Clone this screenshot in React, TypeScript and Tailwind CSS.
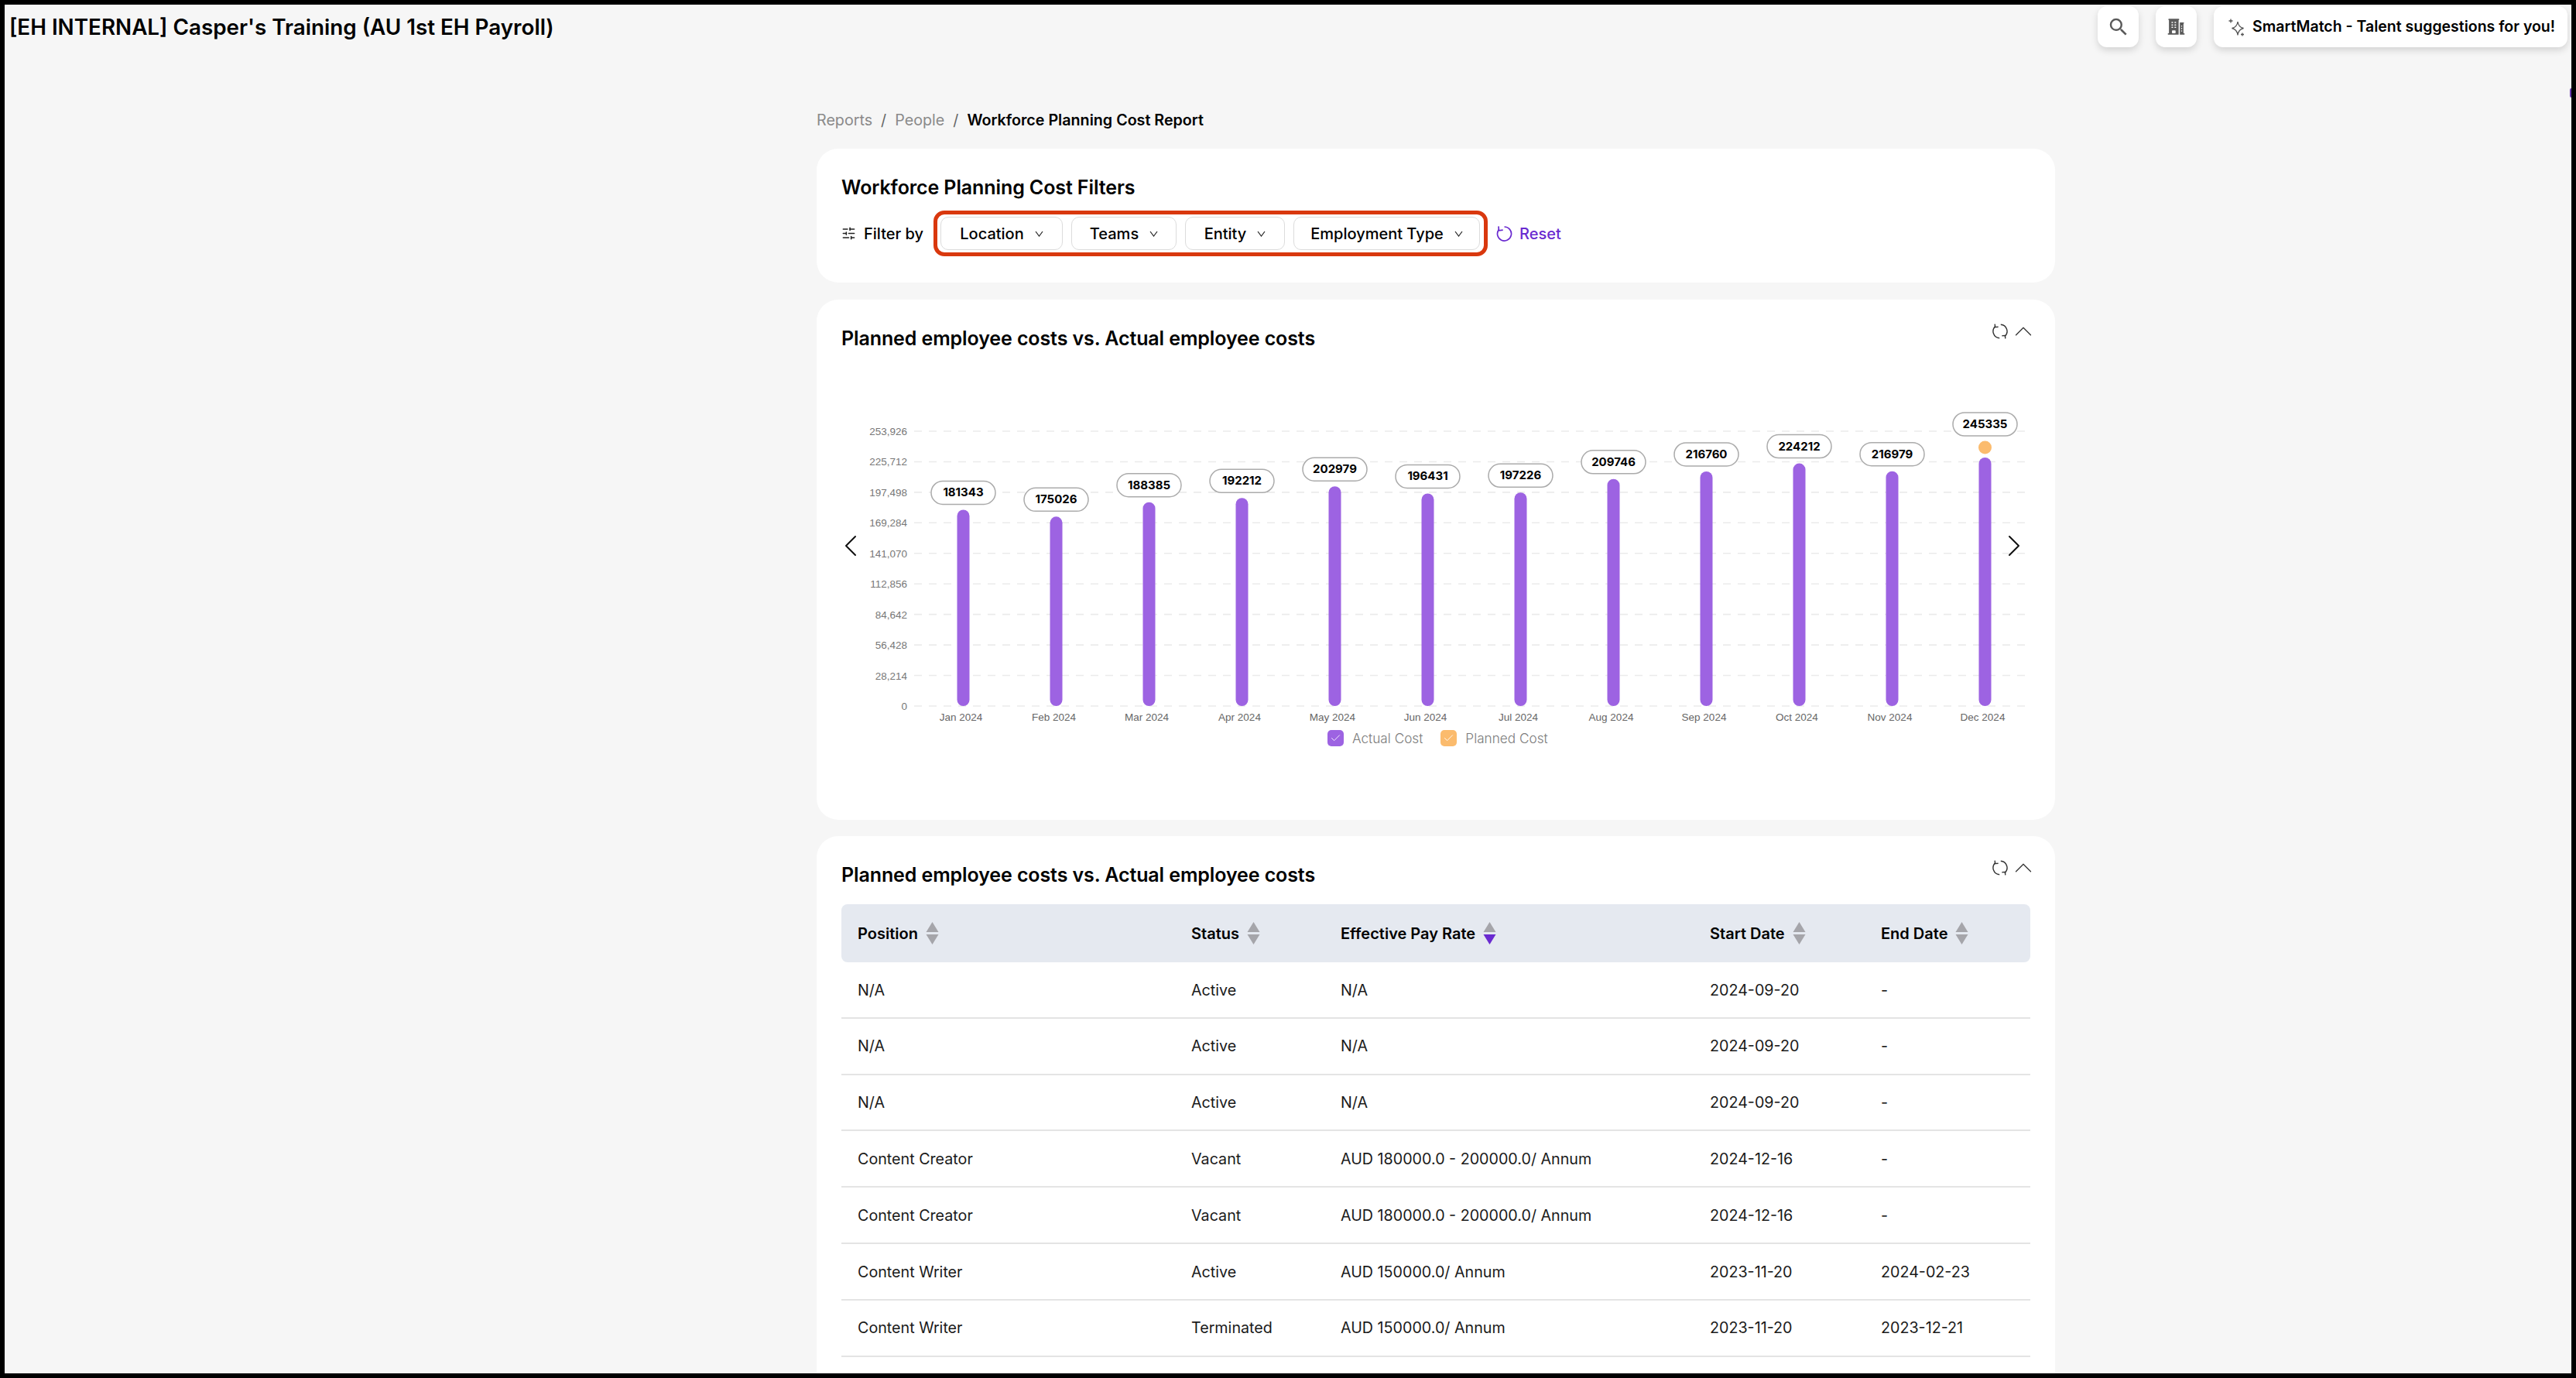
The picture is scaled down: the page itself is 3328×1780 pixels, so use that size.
import { ChevronLeft, ChevronRight, ChevronUp, Check, SlidersHorizontal } from "lucide-react";
import { HiBuildingOffice2 } from "react-icons/hi2";
import { MdSearch } from "react-icons/md";

const BAR_BASE = 355;
const BAR_MAX = 253926;

const yTicks = ["253,926", "225,712", "197,498", "169,284", "141,070", "112,856", "84,642", "56,428", "28,214", "0"];

const months = [
  { label: "Jan 2024", value: 181343 },
  { label: "Feb 2024", value: 175026 },
  { label: "Mar 2024", value: 188385 },
  { label: "Apr 2024", value: 192212 },
  { label: "May 2024", value: 202979 },
  { label: "Jun 2024", value: 196431 },
  { label: "Jul 2024", value: 197226 },
  { label: "Aug 2024", value: 209746 },
  { label: "Sep 2024", value: 216760 },
  { label: "Oct 2024", value: 224212 },
  { label: "Nov 2024", value: 216979 },
  { label: "Dec 2024", value: 245335, bar: 321, planned: true },
];

const rows = [
  ["N/A", "Active", "N/A", "2024-09-20", "-"],
  ["N/A", "Active", "N/A", "2024-09-20", "-"],
  ["N/A", "Active", "N/A", "2024-09-20", "-"],
  ["Content Creator", "Vacant", "AUD 180000.0 - 200000.0/ Annum", "2024-12-16", "-"],
  ["Content Creator", "Vacant", "AUD 180000.0 - 200000.0/ Annum", "2024-12-16", "-"],
  ["Content Writer", "Active", "AUD 150000.0/ Annum", "2023-11-20", "2024-02-23"],
  ["Content Writer", "Terminated", "AUD 150000.0/ Annum", "2023-11-20", "2023-12-21"],
];

const COLS = "grid grid-cols-[431px_193px_477px_221px_214px]";

function SortIcon({ active }: { active?: boolean }) {
  return (
    <svg width="17" height="29" viewBox="0 0 17 29" className="ml-[10px]">
      <path d="M8.5 0 L16.5 13 H0.5 Z" fill="#a5a5aa" strokeLinejoin="round" />
      <path d="M0.5 16 H16.5 L8.5 29 Z" fill={active ? "#6a2bd0" : "#a5a5aa"} />
    </svg>
  );
}

function SyncIcon() {
  return (
    <svg width="20" height="20" viewBox="0 0 20 20" fill="none" stroke="#333" strokeWidth="1.4">
      <path d="M4 3.4 A8.8 8.8 0 0 0 9.2 18.8" />
      <path d="M16 16.6 A8.8 8.8 0 0 0 10.8 1.2" />
      <path d="M3.2 0.6 L3.6 4.6 L7.6 4.2" />
      <path d="M16.8 19.4 L16.4 15.4 L12.4 15.8" />
    </svg>
  );
}

function CardHeader({ title }: { title: string }) {
  return (
    <div className="flex items-start justify-between">
      <h2 className="mt-[34px] text-[25px] leading-[32px] font-semibold tracking-[-0.1px] text-black">{title}</h2>
      <div className="mt-[31px] flex items-center gap-[10px]">
        <SyncIcon />
        <ChevronUp size={38} strokeWidth={0.8} color="#333" className="-mx-[9.5px] -my-[9px]" />
      </div>
    </div>
  );
}

function FilterButton({ label, width }: { label: string; width: string }) {
  return (
    <button
      type="button"
      className={`flex h-[43px] items-center justify-center gap-[14px] rounded-[10px] border border-[#dcdcdc] bg-white text-[20px] font-medium text-black ${width}`}
    >
      {label}
      <svg width="11" height="8" viewBox="0 0 11 8" fill="none" stroke="#222" strokeWidth="1.2">
        <path d="M1 1 L5.5 7 L10 1" />
      </svg>
    </button>
  );
}

function Chart() {
  return (
    <svg width="1600" height="560" viewBox="0 0 1600 560" className="block" fontFamily="'Liberation Sans', sans-serif">
      {yTicks.map((tick, i) => {
        const y = 170 + i * 39.44;
        return (
          <g key={tick}>
            <line x1="126" x2="1568" y1={y} y2={y} stroke="#ebebeb" strokeWidth="1.6" strokeDasharray="10 9" />
            <text x="117" y={y + 5} textAnchor="end" fontSize="13.5" fill="#777">
              {tick}
            </text>
          </g>
        );
      })}
      {months.map((m, i) => {
        const cx = 189.5 + i * 120;
        const h = m.bar ?? (m.value / BAR_MAX) * BAR_BASE;
        const top = 525 - h;
        const pillBottom = m.planned ? 176 : top - 7;
        return (
          <g key={m.label}>
            <rect x={cx - 8} y={top} width="16" height={h} rx="8" fill="#9d63e2" />
            {m.planned && <circle cx={cx} cy="191" r="8.5" fill="#fbbb6d" />}
            <rect x={cx - 41.5} y={pillBottom - 30} width="83" height="30" rx="15" fill="#fff" stroke="#ababab" strokeWidth="1.5" />
            <text x={cx} y={pillBottom - 10} textAnchor="middle" fontSize="15" fontWeight="700" fill="#000" fontFamily="Inter, sans-serif">
              {m.value}
            </text>
            <text x={cx - 3} y="544" textAnchor="middle" fontSize="13.5" fill="#666">
              {m.label}
            </text>
          </g>
        );
      })}
    </svg>
  );
}

function LegendItem({ color, label }: { color: string; label: string }) {
  return (
    <div className="flex items-center gap-[11px]">
      <span className={`flex h-[21px] w-[21px] items-center justify-center rounded-[5px] ${color}`}>
        <Check size={15} strokeWidth={1.4} color="#fff" />
      </span>
      <span className="text-[17.2px] font-light text-[#7c7c7c]">{label}</span>
    </div>
  );
}

export default function App() {
  return (
    <div className="h-[1780px] w-[3328px] overflow-hidden bg-black p-[6px] font-['Inter',sans-serif]">
      <div className="relative h-full w-full overflow-hidden bg-[#f6f6f6]">
        <div className="absolute right-0 top-[108px] h-[12px] w-[2px] rounded-l-full bg-[#6a3ab0]" />
        {/* top bar */}
        <div className="flex h-[56px] items-start justify-between pl-[6px] pr-[5px]">
          <h1 className="mt-[11px] text-[27.8px] leading-[36px] font-semibold text-black">
            [EH INTERNAL] Casper's Training (AU 1st EH Payroll)
          </h1>
          <div className="flex items-center gap-[22px] pt-[2px]">
            <button type="button" className="flex h-[53px] w-[53px] items-center justify-center rounded-[12px] bg-white shadow-[0_4px_10px_rgba(0,0,0,0.14)]">
              <MdSearch size={30} color="#5a5a5a" />
            </button>
            <button type="button" className="flex h-[53px] w-[53px] items-center justify-center rounded-[12px] bg-white shadow-[0_4px_10px_rgba(0,0,0,0.14)]">
              <HiBuildingOffice2 size={25} color="#5a5a5a" />
            </button>
            <button type="button" className="flex h-[53px] w-[457px] items-center gap-[10px] whitespace-nowrap rounded-[12px] bg-white pl-[18px] text-[19.5px] font-semibold text-black shadow-[0_4px_10px_rgba(0,0,0,0.14)]">
              <svg width="22" height="24" viewBox="0 0 22 24" fill="none" stroke="#555" strokeWidth="1.3">
                <path d="M13 5 C13.6 10 15.5 12.4 20.5 13.5 C15.5 14.6 13.6 17 13 22.5 C12.4 17 10.5 14.6 5.5 13.5 C10.5 12.4 12.4 10 13 5 Z" />
                <path d="M4 1.5 V6.5 M1.5 4 H6.5" />
                <path d="M19 19.5 V23.5 M17 21.5 H21" />
              </svg>
              SmartMatch - Talent suggestions for you!
            </button>
          </div>
        </div>

        <div className="ml-[1049px] w-[1600px] pt-[80px]">
          {/* breadcrumb */}
          <div className="flex h-[28px] items-center gap-[11px] text-[19.7px] text-[#8a8a8a]">
            <span>Reports</span>
            <span className="text-[#666]">/</span>
            <span>People</span>
            <span className="text-[#666]">/</span>
            <span className="font-semibold text-black">Workforce Planning Cost Report</span>
          </div>

          {/* filters */}
          <div className="mt-[22px] h-[173px] rounded-[28px] bg-white px-[32px]">
            <h2 className="pt-[34px] text-[25px] leading-[32px] font-semibold tracking-[-0.1px] text-black">Workforce Planning Cost Filters</h2>
            <div className="mt-[14px] flex items-center">
              <SlidersHorizontal size={19} strokeWidth={2} color="#222" />
              <span className="ml-[10px] w-[81px] whitespace-nowrap text-[20px] font-medium text-black">Filter by</span>
              <div className="ml-[9px] flex h-[59px] w-[716px] items-center gap-[11px] rounded-[14px] border-[5px] border-[#d9380e] pl-[4px]">
                <FilterButton label="Location" width="w-[158px]" />
                <FilterButton label="Teams" width="w-[136px]" />
                <FilterButton label="Entity" width="w-[129px]" />
                <FilterButton label="Employment Type" width="w-[241px]" />
              </div>
              <svg width="21" height="21" viewBox="0 0 21 21" fill="none" stroke="#6a2bd0" strokeWidth="1.7" className="ml-[11px]">
                <path d="M10.5 2 A9 9 0 1 1 3.4 5.5" />
                <path d="M3 1.4 L3.4 6.8 L8.7 6.2" />
              </svg>
              <span className="ml-[9px] text-[20px] font-medium text-[#6a2bd0]">Reset</span>
            </div>
          </div>

          {/* chart card */}
          <div className="relative mt-[22px] h-[672px] rounded-[28px] bg-white">
            <div className="px-[32px]">
              <CardHeader title="Planned employee costs vs. Actual employee costs" />
            </div>
            <div className="absolute left-0 top-0">
              <Chart />
            </div>
            <ChevronLeft size={48} strokeWidth={1} color="#111" className="absolute left-[19.5px] top-[294px]" />
            <ChevronRight size={48} strokeWidth={1} color="#111" className="absolute left-[1522.5px] top-[294px]" />
            <div className="absolute left-[660px] top-[554px] flex gap-[23px]">
              <LegendItem color="bg-[#9d63e2]" label="Actual Cost" />
              <LegendItem color="bg-[#fbbb6d]" label="Planned Cost" />
            </div>
          </div>

          {/* table card */}
          <div className="mt-[21px] h-[800px] rounded-[28px] bg-white px-[32px]">
            <CardHeader title="Planned employee costs vs. Actual employee costs" />
            <div className={`${COLS} mt-[22px] h-[75px] items-center rounded-[8px] bg-[#e5e9f0] text-[20px] font-semibold text-black`}>
              <div className="flex items-center pl-[21px]">Position<SortIcon /></div>
              <div className="flex items-center pl-[21px]">Status<SortIcon /></div>
              <div className="flex items-center pl-[21px]">Effective Pay Rate<SortIcon active /></div>
              <div className="flex items-center pl-[21px]">Start Date<SortIcon /></div>
              <div className="flex items-center pl-[21px]">End Date<SortIcon /></div>
            </div>
            {rows.map((row, i) => (
              <div key={i} className={`${COLS} h-[72.8px] items-center border-b-2 border-[#e4e4e4] pt-[2px] text-[19.7px] text-[#1a1a1a]`}>
                {row.map((cell, j) => (
                  <div key={j} className="pl-[21px]">{cell}</div>
                ))}
              </div>
            ))}
          </div>
        </div>
      </div>
    </div>
  );
}
